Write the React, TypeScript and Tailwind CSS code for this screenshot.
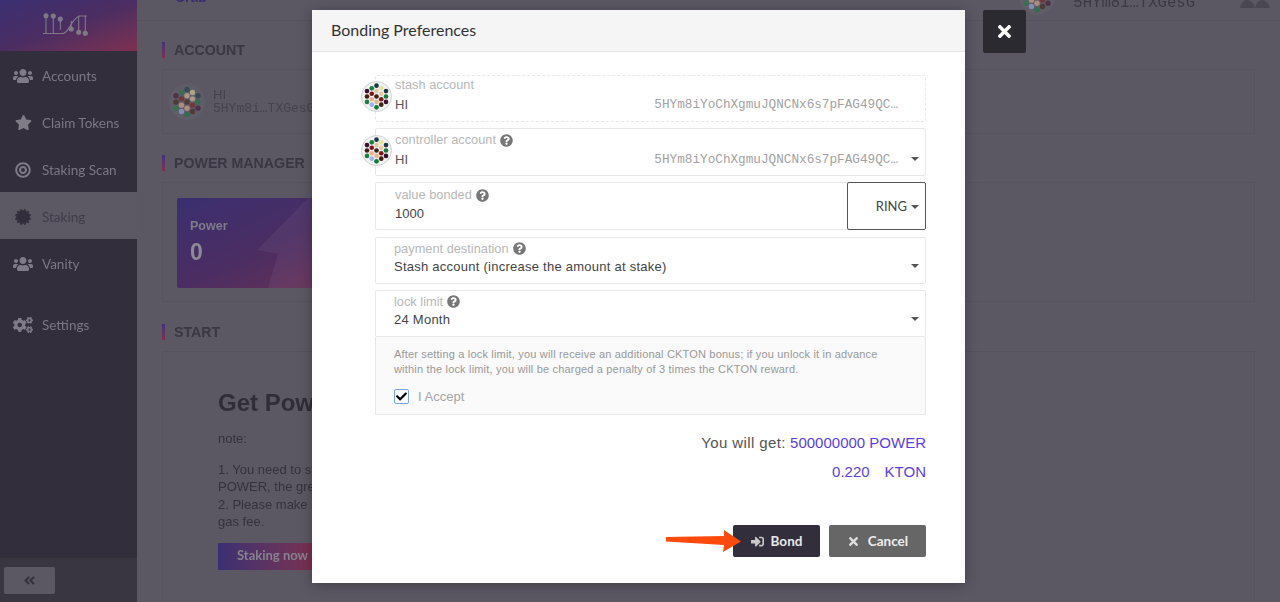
import { FaUsers, FaStar, FaBullseye, FaCertificate, FaCogs, FaQuestionCircle, FaCheck, FaTimes, FaSignInAlt, FaAngleDoubleLeft } from "react-icons/fa";

const sans = "font-['Liberation_Sans',Arial,sans-serif]";
const lato = "font-['Lato',sans-serif]";
const mono = "font-['Liberation_Mono',monospace]";

const address = "5HYm8iYoChXgmuJQNCNx6s7pFAG49QC…";

// dots go column by column, top to bottom
const dots = [
  "#3d1030", "#3f2113", "#1a7f3f",
  "#1a7f3f", "#7c1a1a", "#e8b48f", "#9db4f0",
  "#143a46", "#e8c7a0", "#3f2113", "#e8b48f", "#0e7a3c",
  "#e8e0a0", "#e8c7a0", "#7c1a1a", "#3f2113",
  "#143a46", "#0e7a3c", "#3d1030",
];
const columns = [3, 4, 5, 4, 3];

function Identicon({ size = 30, dim = false }: { size?: number; dim?: boolean }) {
  let n = 0;
  return (
    <svg width={size} height={size} viewBox="0 0 32 32" className="shrink-0">
      <circle cx="16" cy="16" r="15.5" fill={dim ? "#605d69" : "#f2f2f2"} stroke={dim ? "#605d69" : "#cfcfcf"} />
      {columns.map((count, col) =>
        Array.from({ length: count }).map((_, i) => {
          const fill = dots[n++];
          return (
            <circle
              key={`${col}-${i}`}
              cx={16 + (col - 2) * 4.9}
              cy={16 + (i - (count - 1) / 2) * 5.6}
              r="2.4"
              fill={fill}
              opacity={dim ? 0.55 : 1}
            />
          );
        })
      )}
    </svg>
  );
}

function Logo() {
  return (
    <svg width="46" height="24" viewBox="0 0 46 24" fill="none" stroke="#7f7a88" strokeWidth="1.1">
      <path d="M0 20.5H20C26 20 27 8 36 3H44M3 3V20M10.3 3V20M17.3 6V17M28.3 8V16M35.7 3V19M42.3 3V20" />
      <circle cx="3" cy="2.7" r="2" fill="#7f7a88" />
      <circle cx="10.3" cy="3" r="2" fill="#7f7a88" />
      <circle cx="17.3" cy="6" r="2" fill="#7f7a88" />
      <circle cx="28.3" cy="16" r="2" fill="#7f7a88" />
      <circle cx="35.7" cy="19.3" r="2" fill="#7f7a88" />
      <circle cx="42.3" cy="20.3" r="2" fill="#7f7a88" />
    </svg>
  );
}

function NavItem({ icon, label, active, className = "" }: { icon: React.ReactNode; label: string; active?: boolean; className?: string }) {
  return (
    <div className={`flex h-[47px] items-center pt-[2px] ${active ? "bg-[#5c5965] text-[#3f3c49]" : "text-[#7b7885]"} ${className}`}>
      <span className={`flex w-[42px] justify-center pl-[4px] ${active ? "text-[#322e3c]" : "text-[#7f7c87]"}`}>{icon}</span>
      <span className={`${lato} text-[13.5px]`}>{label}</span>
    </div>
  );
}

function SectionTitle({ children }: { children: string }) {
  return (
    <div className="flex h-[16px] items-center">
      <span className="h-[16px] w-[3px] bg-gradient-to-b from-[#41307a] to-[#7d2f50]" />
      <span className={`${sans} ml-[9px] pt-[2px] text-[14.2px] font-bold text-[#3a3743]`}>{children}</span>
    </div>
  );
}

function Background() {
  return (
    <div className="flex h-[602px] w-[1280px] overflow-hidden bg-[#5b5864]">
      <aside className="flex w-[137px] shrink-0 flex-col bg-[#322e3c]">
        <div className="flex h-[51.4px] items-center justify-center bg-gradient-to-br from-[#3b2f72] via-[#4b2d62] to-[#7e2f4f] pb-[2px] pr-[5px]">
          <Logo />
        </div>
        <NavItem icon={<FaUsers size={20} />} label="Accounts" />
        <NavItem icon={<FaStar size={17} />} label="Claim Tokens" />
        <NavItem icon={<FaBullseye size={16} />} label="Staking Scan" />
        <NavItem icon={<FaCertificate size={16} />} label="Staking" active />
        <NavItem icon={<FaUsers size={20} />} label="Vanity" />
        <NavItem icon={<FaCogs size={20} />} label="Settings" className="mt-[14px]" />
        <div className="mt-auto flex h-[44px] items-center bg-[#393642] pl-[4px]">
          <div className="flex h-[27px] w-[51px] items-center justify-center rounded-[2px] bg-[#5b5864] text-[#35323e]">
            <FaAngleDoubleLeft size={13} />
          </div>
        </div>
      </aside>

      <main className="min-w-0 flex-1">
        <header className="flex h-[21px] items-end justify-between overflow-hidden border-b border-[#56535f] pl-[38px] pr-[10px]">
          <span className={`${sans} mb-[12px] text-[14px] font-semibold text-[#3b2f72]`}>Crab</span>
          <div className="flex items-end">
            <div className="mb-[5px]">
              <Identicon size={36} dim />
            </div>
            <span className={`${mono} mb-[8px] ml-[18px] text-[15.6px] leading-[18px] text-[#3c3945]`}>5HYm8i…TXGesG</span>
            <svg width="30" height="8" viewBox="0 0 30 8" className="mb-[12px] ml-[45px]" fill="#4a4753">
              <path d="M0 8C1 3 4 0 7 0s7 3 8 8ZM15 8C16 3 19 0 22 0s7 3 8 8Z" />
            </svg>
          </div>
        </header>

        <div className="pl-[25px] pr-[25px] pt-[21px]">
          <SectionTitle>ACCOUNT</SectionTitle>
          <div className="mt-[11px] flex h-[65px] items-center border border-[#56535f] pl-[6px]">
            <Identicon size={36} dim />
            <div className="ml-[8px] leading-none">
              <div className={`${sans} -mt-[1px] text-[13px] text-[#45424e]`}>HI</div>
              <div className={`${mono} mt-[1px] text-[13px] text-[#45424e]`}>5HYm8i…TXGesG</div>
            </div>
          </div>

          <div className="mt-[21px]">
            <SectionTitle>POWER MANAGER</SectionTitle>
          </div>
          <div className="mt-[11px] h-[120px] border border-[#56535f] px-[14px] pt-[15px]">
            <div className="relative h-[90px] w-[200px] overflow-hidden rounded-[2px] bg-gradient-to-br from-[#3a2f70] via-[#4b2d62] to-[#6e2f52] pl-[13px] pt-[19px]">
              <svg width="200" height="90" viewBox="0 0 200 90" className="absolute left-0 top-0">
                <polygon points="131,0 80,52 101,56 91,90 200,90 200,0" fill="#ffffff" fillOpacity="0.05" />
              </svg>
              <div className={`${sans} text-[12.5px] font-semibold text-[#7f7c88]`}>Power</div>
              <div className={`${sans} mt-[2px] text-[23px] font-semibold leading-[28px] text-[#8d8a96]`}>0</div>
            </div>
          </div>

          <div className="mt-[22px]">
            <SectionTitle>START</SectionTitle>
          </div>
          <div className="mt-[11px] h-[260px] border border-[#56535f] pl-[55px] pt-[37px]">
            <div className={`${sans} text-[24px] font-semibold leading-[28px] text-[#302d38]`}>Get Power</div>
            <div className={`${sans} mt-[14px] text-[13px] leading-[16px] text-[#35323d]`}>note:</div>
            <div className={`${sans} mt-[14px] w-[500px] text-[13px] leading-[17.4px] text-[#35323d]`}>
              <div>1. You need to stake</div>
              <div>POWER, the greater</div>
              <div>2. Please make sure</div>
              <div>gas fee.</div>
            </div>
            <div className={`${lato} mt-[12px] flex h-[27px] w-[100px] items-center whitespace-nowrap rounded-[1px] bg-gradient-to-r from-[#3b2f72] to-[#7e2f4f] pl-[19px] text-[13px] font-bold text-[#85828d]`}>
              Staking now
            </div>
          </div>
        </div>
      </main>
    </div>
  );
}

function Caret() {
  return <span className="h-0 w-0 border-x-[4px] border-t-[4px] border-x-transparent border-t-[#555]" />;
}

function Label({ children, hint }: { children: string; hint?: boolean }) {
  return (
    <div className={`${sans} flex h-[16px] items-center text-[12.8px] font-light text-[#b8b8b8]`}>
      {children}
      {hint && <FaQuestionCircle size={13} className="ml-[4px] text-[#777]" />}
    </div>
  );
}

function AccountRow({ label, hint, dashed }: { label: string; hint?: boolean; dashed?: boolean }) {
  return (
    <div className="relative">
      <div className={`rounded-[2px] border border-[#e8e8e8] pl-[19px] ${dashed ? "h-[47px] border-dashed pt-[1px]" : "h-[48px] pt-[3px]"}`}>
        <Label hint={hint}>{label}</Label>
        <div className={`flex items-center ${dashed ? "mt-[2px]" : "mt-[1.5px]"}`}>
          <span className={`${sans} flex-1 text-[13px] text-[#555]`}>HI</span>
          <span className={`${mono} text-[12.7px] text-[#a2a2a2]`}>{address}</span>
          <span className="flex w-[27px] justify-center pl-[7px]">{!dashed && <Caret />}</span>
        </div>
      </div>
      <div className={`absolute left-[-14px] ${dashed ? "top-[6px]" : "top-[7px]"}`}>
        <Identicon size={31} />
      </div>
    </div>
  );
}

function SelectRow({ label, value, className = "" }: { label: string; value: string; className?: string }) {
  return (
    <div className={`h-[47px] rounded-[2px] border border-[#e8e8e8] pl-[18px] pt-[2.5px] ${className}`}>
      <Label hint>{label}</Label>
      <div className="flex items-center">
        <span className={`${sans} flex-1 text-[13px] tracking-[0.25px] text-[#444]`}>{value}</span>
        <span className="flex w-[27px] justify-center pl-[7px]">
          <Caret />
        </span>
      </div>
    </div>
  );
}

function Modal() {
  return (
    <div className="flex h-[573px] w-[653px] flex-col bg-white shadow-[0_2px_12px_rgba(0,0,0,0.3)]">
      <div className={`${lato} flex h-[42px] shrink-0 items-center border-b border-[#e4e4e4] bg-[#f5f5f5] pb-[1px] pl-[19px] text-[16px] text-[#333]`}>
        Bonding Preferences
      </div>
      <div className="flex flex-1 flex-col pl-[63px] pr-[39px] pt-[23px]">
        <div className="flex flex-col gap-[6px]">
          <AccountRow label="stash account" dashed />
          <AccountRow label="controller account" hint />
          <div className="flex h-[48px] rounded-[2px] border border-[#e8e8e8]">
            <div className="flex-1 pl-[19px] pt-[4px]">
              <Label hint>value bonded</Label>
              <div className={`${sans} mt-[1px] text-[13px] text-[#444]`}>1000</div>
            </div>
            <div className="m-[-1px] flex w-[79px] items-center justify-end gap-[4px] rounded-[2px] border border-[#555] pr-[6px] pt-[1px]">
              <span className={`${lato} text-[13px] text-[#444]`}>RING</span>
              <Caret />
            </div>
          </div>
          <SelectRow label="payment destination" value="Stash account (increase the amount at stake)" className="mt-[1px]" />
          <SelectRow label="lock limit" value="24 Month" />
        </div>

        <div className="h-[78px] border border-t-0 border-[#e8e8e8] bg-[#fafafa] pl-[18px] pt-[10px]">
          <p className={`${sans} text-[11px] leading-[15px] tracking-[0.18px] text-[#999]`}>
            After setting a lock limit, you will receive an additional CKTON bonus; if you unlock it in advance
            <br />
            within the lock limit, you will be charged a penalty of 3 times the CKTON reward.
          </p>
          <div className="mt-[10px] flex items-center">
            <span className="flex h-[15px] w-[15px] items-center justify-center rounded-[2px] border border-[#7aa7d9] bg-white text-black">
              <FaCheck size={11} />
            </span>
            <span className={`${sans} ml-[9px] text-[13px] font-light text-[#a5a5a5]`}>I Accept</span>
          </div>
        </div>

        <div className={`${sans} mt-[19px] text-right text-[15px] leading-[18px] text-[#555]`}>
          <span className="tracking-[0.4px]">You will get:</span> <span className="text-[#5a3fe0]">500000000 POWER</span>
        </div>
        <div className={`${sans} mt-[11px] text-right text-[15px] leading-[18px] text-[#5a3fe0]`}>
          0.220
          <span className="ml-[15px]">KTON</span>
        </div>

        <div className="relative mt-[44px] flex justify-end gap-[9px]">
          <button className={`${lato} flex h-[32px] w-[87px] items-center justify-center gap-[7px] rounded-[2px] bg-[#322e3c] text-[13.5px] font-bold text-[#e8e8e8]`}>
            <FaSignInAlt size={13} className="text-[#c8c8c8]" />
            Bond
          </button>
          <button className={`${lato} flex h-[32px] w-[97px] items-center justify-center gap-[8px] rounded-[2px] bg-[#666] text-[13.5px] font-bold text-[#eee]`}>
            <FaTimes size={13} className="text-[#ddd]" />
            Cancel
          </button>
          <svg width="78" height="26" viewBox="0 0 78 26" className="absolute left-[291px] top-[3px]">
            <path d="M0 9 58 8 58 2 75 13.5 57 24 58 17 0 13.5Z" fill="#ff4a0d" />
          </svg>
        </div>
      </div>
    </div>
  );
}

export default function App() {
  return (
    <div className="relative h-[602px] w-[1280px] overflow-hidden">
      <div className="blur-[0.6px]">
        <Background />
      </div>
      <div className="absolute inset-0 flex items-start gap-[18px] pl-[312px] pt-[10px]">
        <Modal />
        <button className="flex h-[43px] w-[43px] items-center justify-center rounded-[2px] bg-[#2c2a31] text-white">
          <FaTimes size={19} />
        </button>
      </div>
    </div>
  );
}
